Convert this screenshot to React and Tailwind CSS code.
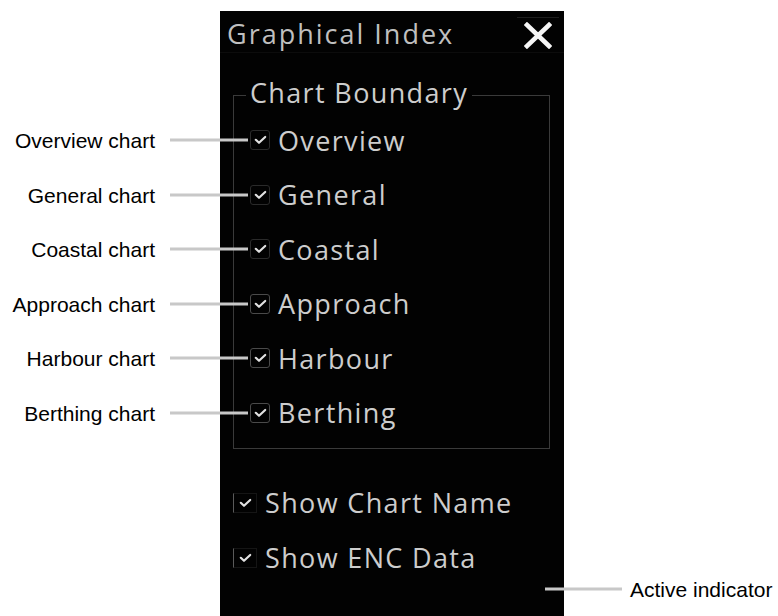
import React from "react";

const PANEL_FONT = { fontFamily: '"Open Sans", "Noto Sans", sans-serif' };
const LABEL_FONT = { fontFamily: '"Liberation Sans", Arial, sans-serif' };

function Check({ className = "" }) {
  return (
    <svg width="13" height="10" viewBox="0 0 13 10" className={className}>
      <path d="M1.8 4.8 L5 7.8 L11.2 2" fill="none" stroke="#e2e2e2" strokeWidth="2.2" strokeLinecap="round" strokeLinejoin="round" />
    </svg>
  );
}

function Callout({ text }) {
  return (
    <div className="absolute right-full mr-[2px] top-1/2 -translate-y-1/2 flex items-center gap-[15px] whitespace-nowrap">
      <span className="text-[21px] leading-none text-black" style={LABEL_FONT}>{text}</span>
      <div className="w-[78px] h-[3px] bg-[#c8c8c8]" />
    </div>
  );
}

function ChartRow({ label, callout, strong }) {
  return (
    <div className="h-[54.5px] flex items-center gap-[8px]">
      <div className="relative">
        <div
          className={
            "w-[20px] h-[20px] rounded-[3px] border flex items-center justify-center " +
            (strong ? "border-[#4a4a4a]" : "border-[#2a2a2a]")
          }
        >
          <Check />
        </div>
        <Callout text={callout} />
      </div>
      <span className="text-[27px] tracking-[1.35px] text-[#cdcdcd] leading-none">{label}</span>
    </div>
  );
}

function ShowRow({ label }) {
  return (
    <div className="h-[55px] flex items-center gap-[8px] pl-[13px]">
      <div className="w-[24px] h-[20px] border border-[#151515] border-l-[#5a5a5a] flex items-center justify-center">
        <Check />
      </div>
      <span className="text-[27px] tracking-[1.35px] text-[#cdcdcd] leading-none">{label}</span>
    </div>
  );
}

export default function App() {
  const rows = [
    ["Overview", "Overview chart", false],
    ["General", "General chart", false],
    ["Coastal", "Coastal chart", false],
    ["Approach", "Approach chart", true],
    ["Harbour", "Harbour chart", true],
    ["Berthing", "Berthing chart", true],
  ];
  return (
    <div className="w-[778px] h-[616px] bg-white overflow-hidden flex">
      <div className="ml-[220px] mt-[11px] w-[344px] h-[605px] bg-[#020202] flex flex-col" style={PANEL_FONT}>
        <div className="h-[42px] flex items-center justify-between border-b border-[#0c0c0c]">
          <span className="pl-[7px] pt-[3px] text-[27px] tracking-[2px] text-[#bfbfbf] leading-none">Graphical Index</span>
          <div className="w-[42px] h-[36px] mt-[7px] mr-[5px] border-t border-[#1e1e1e] flex items-center justify-center">
            <svg width="28" height="27" viewBox="0 0 28 27">
              <path d="M3 3 L25 24 M25 3 L3 24" stroke="#f6f6f6" strokeWidth="4.6" strokeLinecap="square" />
            </svg>
          </div>
        </div>
        <fieldset className="mt-[26px] ml-[13px] mr-[14px] border border-[#3a3a3a] pl-[12px] pr-[8px] pt-[2px] pb-[8px] min-w-0">
          <legend className="px-[4px] text-[27px] tracking-[1.35px] text-[#cdcdcd] leading-[32px] -translate-y-[2px]">Chart Boundary</legend>
          {rows.map(([l, c, s]) => (
            <div key={l} className="pl-[4px]">
              <ChartRow label={l} callout={c} strong={s} />
            </div>
          ))}
        </fieldset>
        <div className="mt-[26px]">
          <ShowRow label="Show Chart Name" />
          <ShowRow label="Show ENC Data" />
        </div>
        <div className="relative h-0 mt-[3.5px] ml-[325px]">
          <div className="absolute left-0 top-0 -translate-y-1/2 flex items-center gap-[8px] whitespace-nowrap">
            <div className="w-[77px] h-[3px] bg-[#c8c8c8]" />
            <span className="text-[21px] leading-none text-black" style={LABEL_FONT}>Active indicator</span>
          </div>
        </div>
      </div>
    </div>
  );
}
